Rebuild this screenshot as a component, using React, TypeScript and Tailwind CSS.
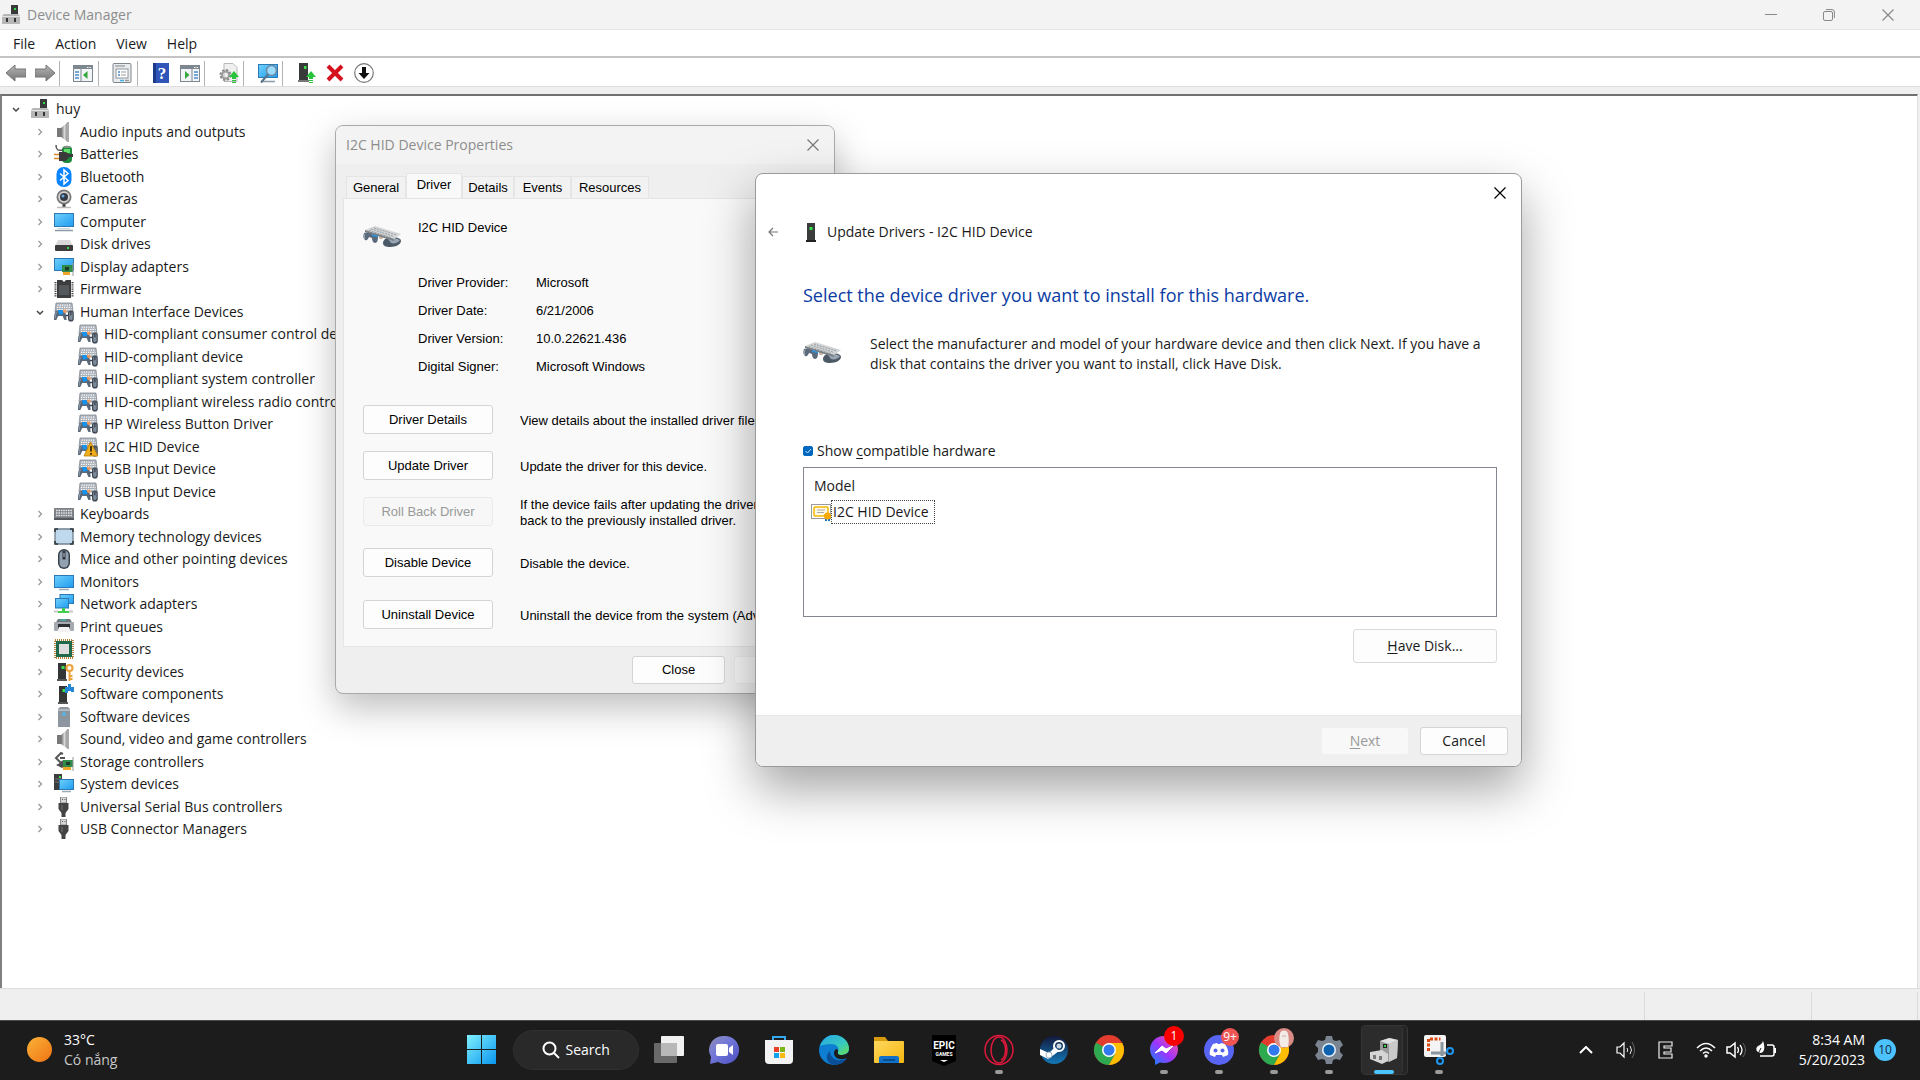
import { useState, type ReactNode } from 'react';

type IconName =
  | 'computerRoot' | 'speaker' | 'battery' | 'bluetooth' | 'camera' | 'computer' | 'disk' | 'display'
  | 'firmware' | 'hid' | 'hidWarn' | 'keyboard' | 'memory' | 'mouse' | 'monitor' | 'network' | 'printer'
  | 'processor' | 'security' | 'component' | 'software' | 'storage' | 'system' | 'usb';

interface TreeItem {
  label: string;
  icon: IconName;
  depth: 0 | 1 | 2;
  open?: boolean;
}

const tree: TreeItem[] = [
  { label: 'huy', icon: 'computerRoot', depth: 0, open: true },
  { label: 'Audio inputs and outputs', icon: 'speaker', depth: 1 },
  { label: 'Batteries', icon: 'battery', depth: 1 },
  { label: 'Bluetooth', icon: 'bluetooth', depth: 1 },
  { label: 'Cameras', icon: 'camera', depth: 1 },
  { label: 'Computer', icon: 'computer', depth: 1 },
  { label: 'Disk drives', icon: 'disk', depth: 1 },
  { label: 'Display adapters', icon: 'display', depth: 1 },
  { label: 'Firmware', icon: 'firmware', depth: 1 },
  { label: 'Human Interface Devices', icon: 'hid', depth: 1, open: true },
  { label: 'HID-compliant consumer control device', icon: 'hid', depth: 2 },
  { label: 'HID-compliant device', icon: 'hid', depth: 2 },
  { label: 'HID-compliant system controller', icon: 'hid', depth: 2 },
  { label: 'HID-compliant wireless radio controls', icon: 'hid', depth: 2 },
  { label: 'HP Wireless Button Driver', icon: 'hid', depth: 2 },
  { label: 'I2C HID Device', icon: 'hidWarn', depth: 2 },
  { label: 'USB Input Device', icon: 'hid', depth: 2 },
  { label: 'USB Input Device', icon: 'hid', depth: 2 },
  { label: 'Keyboards', icon: 'keyboard', depth: 1 },
  { label: 'Memory technology devices', icon: 'memory', depth: 1 },
  { label: 'Mice and other pointing devices', icon: 'mouse', depth: 1 },
  { label: 'Monitors', icon: 'monitor', depth: 1 },
  { label: 'Network adapters', icon: 'network', depth: 1 },
  { label: 'Print queues', icon: 'printer', depth: 1 },
  { label: 'Processors', icon: 'processor', depth: 1 },
  { label: 'Security devices', icon: 'security', depth: 1 },
  { label: 'Software components', icon: 'component', depth: 1 },
  { label: 'Software devices', icon: 'software', depth: 1 },
  { label: 'Sound, video and game controllers', icon: 'speaker', depth: 1 },
  { label: 'Storage controllers', icon: 'storage', depth: 1 },
  { label: 'System devices', icon: 'system', depth: 1 },
  { label: 'Universal Serial Bus controllers', icon: 'usb', depth: 1 },
  { label: 'USB Connector Managers', icon: 'usb', depth: 1 },
];

const indent = { 0: 'pl-[6px]', 1: 'pl-[30px]', 2: 'pl-[54px]' };

/* shared gradients, referenced by id from every drawing below */
const Defs = () => (
  <svg className="absolute size-0" aria-hidden="true">
    <defs>
      <linearGradient id="screen" x1="0" y1="0" x2="1" y2="1"><stop offset="0" stopColor="#6fd0fb" /><stop offset="1" stopColor="#1f9cf0" /></linearGradient>
      <linearGradient id="metal" x1="0" y1="0" x2="1" y2="0"><stop offset="0" stopColor="#6e6e6e" /><stop offset=".5" stopColor="#d8d8d8" /><stop offset="1" stopColor="#7d7d7d" /></linearGradient>
      <linearGradient id="arrow" x1="0" y1="0" x2="0" y2="1"><stop offset="0" stopColor="#b5b5b5" /><stop offset="1" stopColor="#757575" /></linearGradient>
      <linearGradient id="win" x1="0" y1="0" x2="1" y2="1"><stop offset="0" stopColor="#7ff0ff" /><stop offset="1" stopColor="#0b96ee" /></linearGradient>
      <linearGradient id="folder" x1="0" y1="0" x2="1" y2="1"><stop offset="0" stopColor="#ffd75e" /><stop offset="1" stopColor="#f5b60f" /></linearGradient>
      <linearGradient id="chat" x1="0" y1="0" x2="1" y2="1"><stop offset="0" stopColor="#8e8db5" /><stop offset=".4" stopColor="#7479d8" /><stop offset="1" stopColor="#4a4fc4" /></linearGradient>
      <linearGradient id="msgr" x1="0" y1="1" x2="1" y2="0"><stop offset="0" stopColor="#0a8cff" /><stop offset=".5" stopColor="#a033ff" /><stop offset="1" stopColor="#ff5c87" /></linearGradient>
      <linearGradient id="edgeTop" x1="0" y1="0" x2="1" y2="1"><stop offset="0" stopColor="#2aa7e6" /><stop offset=".6" stopColor="#36c9c0" /><stop offset="1" stopColor="#6be04c" /></linearGradient>
      <linearGradient id="steam" x1="0" y1="0" x2="0" y2="1"><stop offset="0" stopColor="#14193d" /><stop offset="1" stopColor="#1379b8" /></linearGradient>
      <linearGradient id="sun" x1="0" y1="0" x2="1" y2="1"><stop offset="0" stopColor="#fbb33a" /><stop offset="1" stopColor="#ee7313" /></linearGradient>
    </defs>
  </svg>
);

const Hid = () => (
  <>
    <path d="M2 1h16l1 9H1z" fill="#aab0b8" stroke="#868d96" strokeWidth=".8" />
    <path d="M3.500 3.200h13.500M3 5.400h14.500M3 7.600h14.500" stroke="#fff" strokeWidth="1.200" strokeDasharray="1.300 1" />
    <path d="M0 18c-.3-4 .8-9 2.800-9.600H9c2.600.6 3.600 5.600 3.600 9.600h-2.200L8.600 14H4.200L2.300 18z" fill="#5a6879" />
    <path d="M1.200 16.500c0-3 .8-6 2-7" stroke="#93a1b1" strokeWidth=".9" fill="none" />
    <path d="M4 8h4.500l1 4-4.500.8z" fill="#1593f0" />
    <circle cx="10.800" cy="9.300" r="1.800" fill="#ee9a5d" />
    <rect x="14" y="8.500" width="5.800" height="11" rx="2.800" fill="#3f4854" />
    <rect x="15.200" y="9.600" width="3.400" height="8.500" rx="1.700" fill="#7e8b9a" />
    <path d="M16.900 9.600v3.600M11.600 13.500h3" stroke="#39424d" strokeWidth="1.300" />
  </>
);

const tower = (
  <>
    <path d="M4 1h8v16H4z" fill="#343636" />
    <path d="M3 17h10v2H3z" fill="#555" />
    <rect x="7.500" y="4" width="3" height="3" fill="#3be04a" />
  </>
);

const art: Record<IconName, ReactNode> = {
  computerRoot: (
    <>
      <path d="M10 0h7v12h-7z" fill="#383a39" /><rect x="13" y="3" width="2" height="2" fill="#2fe04a" />
      <path d="M1 11l2-2h14l2 2v8H1z" fill="#b6b6b6" /><path d="M1 11h18v1H1z" fill="#e3e3e3" />
      <path d="M5 13h2v4H5zM13 13h2v4h-2z" fill="#353535" />
    </>
  ),
  speaker: (
    <>
      <path d="M3 6h4v9H3z" fill="#777" /><path d="M7 6l7-6v20l-7-5z" fill="url(#metal)" /><path d="M13 0h2v20h-2z" fill="#aaa" />
    </>
  ),
  battery: (
    <>
      <rect x="8" y="2" width="10" height="17" rx="4" fill="#1c8a3c" /><rect x="10" y="5" width="6" height="4" fill="#63e06c" /><path d="M9 4q4-5 8 0z" fill="#8b8f8b" />
      <path d="M2 1c0 5 2 6 7 5" stroke="#555" strokeWidth="1.500" fill="none" />
      <path d="M5 8h6c2 0 3 2 5 2h3v3h-3c-2 0-3 4-5 4H5z" fill="#3b3b3b" /><path d="M0 10.500h5M0 14.500h5" stroke="#d98a22" strokeWidth="1.600" />
    </>
  ),
  bluetooth: (
    <>
      <rect x="2.500" y="0" width="15" height="20" rx="7" fill="#0a84ff" /><path d="M6 6.500l8 7L10 17V3l4 3.500-8 7" fill="none" stroke="#fff" strokeWidth="1.500" />
    </>
  ),
  camera: (
    <>
      <circle cx="10" cy="8" r="7.500" fill="#777" /><circle cx="10" cy="8" r="5.800" fill="#d4d4d4" /><circle cx="10" cy="8" r="4" fill="#333b44" /><circle cx="9" cy="7" r="1.500" fill="#6fa9dd" />
      <path d="M8.500 15h3v3h-3z" fill="#444" /><path d="M3 18.500h14" stroke="#bbb" strokeWidth="1.500" />
    </>
  ),
  computer: (
    <>
      <rect x=".5" y="1.500" width="19" height="13" fill="url(#screen)" stroke="#2c79b5" /><path d="M4 16.500h12" stroke="#cbd5dc" /><path d="M1 18.500h18" stroke="#8c9aa5" strokeWidth="1.500" />
    </>
  ),
  disk: (
    <>
      <path d="M4 6h12l3 6H1z" fill="#d9d9d9" /><rect x="1" y="11" width="18" height="6" rx="1" fill="#3c3c3c" /><rect x="13" y="13" width="2" height="2" fill="#36d64a" />
    </>
  ),
  display: (
    <>
      <rect x=".5" y="1.500" width="19" height="12" fill="url(#screen)" stroke="#2c79b5" /><rect x="8" y="8" width="11" height="7" fill="#2f8c4b" /><rect x="11" y="10" width="4" height="3.500" fill="#1c3b28" /><path d="M9 15h7v3H9z" fill="#f0a526" /><path d="M19 6v13" stroke="#999" />
    </>
  ),
  firmware: (
    <>
      <path d="M3 1h5l2 2 2-2h5v18H3z" fill="#3b3d3f" /><path d="M1.500 3v15M18.500 3v15" stroke="#444" strokeWidth="2" strokeDasharray="1.200 1" /><path d="M5 6h10v10H5z" fill="#56595c" />
    </>
  ),
  hid: <Hid />,
  hidWarn: (
    <>
      <Hid /><path d="M12.500 5L20 19H6z" fill="#f0ae1c" stroke="#b97f08" strokeWidth=".8" /><path d="M13 9v5.500M13 16v1.800" stroke="#241b05" strokeWidth="1.600" />
    </>
  ),
  keyboard: (
    <>
      <rect x="0" y="4" width="20" height="12" rx="1" fill="#7d8085" /><path d="M2 6.500h16M2 9h16M2 11.500h16" stroke="#e5e7ea" strokeWidth="1.500" strokeDasharray="1.600 .8" /><path d="M0 14h20v2H0z" fill="#54575b" />
    </>
  ),
  memory: (
    <>
      <rect x="1" y="2" width="18" height="15" rx="1.500" fill="#bfd8ec" stroke="#6f8190" strokeWidth="1.300" /><path d="M1 5V2h3M16 2h3v3M19 14v3h-3M4 17H1v-3" fill="none" stroke="#30373d" strokeWidth="1.600" />
    </>
  ),
  mouse: (
    <>
      <rect x="4" y="0" width="12" height="20" rx="6" fill="#39414a" /><rect x="5.500" y="1.500" width="9" height="17" rx="4.500" fill="#91a1b0" /><path d="M10 1.500v9" stroke="#2e353c" strokeWidth="3" /><path d="M10 4v4" stroke="#b8c6d2" />
    </>
  ),
  monitor: (
    <>
      <rect x=".5" y="3.500" width="19" height="12" fill="url(#screen)" stroke="#2c79b5" /><path d="M5 17.500h10" stroke="#9babb7" strokeWidth="1.500" />
    </>
  ),
  network: (
    <>
      <rect x="6" y=".5" width="13.500" height="9" fill="url(#screen)" stroke="#2c79b5" /><rect x="1.500" y="4.500" width="13" height="9.500" fill="url(#screen)" stroke="#2c79b5" /><path d="M8 14h3v3h4v2H4v-2h4z" fill="#3fcf4d" /><path d="M0 17.500h4M15 17.500h4" stroke="#c9c9c9" strokeWidth="2" />
    </>
  ),
  printer: (
    <>
      <path d="M4 2h12l3 5H1z" fill="#6f767c" /><rect x="0" y="5" width="20" height="9" rx="1" fill="#a4aaaf" /><path d="M4 7h12v7H4z" fill="#2c3033" /><path d="M5 10h10l2 5H3z" fill="#f3f3f3" /><path d="M6 3h6" stroke="#33c8bb" />
    </>
  ),
  processor: (
    <>
      <rect x="1" y="1" width="18" height="18" fill="none" stroke="#b5813c" strokeWidth="2" strokeDasharray="1 1" /><rect x="2" y="2" width="16" height="16" fill="#21694b" /><rect x="5" y="5" width="10" height="10" fill="#dedede" />
    </>
  ),
  security: (
    <>
      {tower}<circle cx="15.500" cy="6" r="3" fill="none" stroke="#e8a33c" strokeWidth="2.200" /><path d="M15.500 9v10M16 14h2.500M16 17h2.500" stroke="#e8a33c" strokeWidth="2" />
    </>
  ),
  component: (
    <>
      <g transform="translate(1 1)">{tower}</g><path d="M11 3h3V0h3v3h3v5h-3V7h-3v2h-3z" fill="#2386d6" />
    </>
  ),
  software: (
    <>
      <path d="M4 2l2-2h8l2 2v18H4z" fill="#8d969e" /><path d="M4 2h12v2H4z" fill="#b1bac1" /><path d="M10 5l2 2-2 2-2-2z" fill="#43c2ff" />
    </>
  ),
  storage: (
    <>
      <path d="M9 2L7 1 2 6l5 5 2-2M6 6h5" fill="none" stroke="#555" strokeWidth="2" /><path d="M2 13l6-3 5 3-5 3z" fill="#4d4f51" /><rect x="9" y="8" width="10" height="7" fill="#2f8c4b" /><rect x="12" y="10" width="4" height="3" fill="#1c3b28" /><path d="M9 15h8v3H9z" fill="#f0a526" /><path d="M19 5v14" stroke="#999" />
    </>
  ),
  system: (
    <>
      <path d="M0 0h8v16H0z" fill="#3b3d3f" /><path d="M1 5h6M1 8h5" stroke="#777" /><rect x="5" y="2" width="2" height="2" fill="#3be04a" /><rect x="5.500" y="5.500" width="14" height="10" fill="url(#screen)" stroke="#2c79b5" /><path d="M8 17.500h9" stroke="#9babb7" strokeWidth="1.500" />
    </>
  ),
  usb: (
    <>
      <rect x="6.500" y="0" width="6" height="6" fill="#d7d7d7" stroke="#888" /><path d="M8 2.500h1M10.500 2.500h1" stroke="#555" /><path d="M4.500 6h10v6l-3 4v4h-4v-4l-3-4z" fill="#444" /><path d="M8 8v5" stroke="#777" />
    </>
  ),
};

const Icon = ({ name }: { name: IconName }) => (
  <svg viewBox="0 0 20 20" className="size-5 shrink-0" aria-hidden="true">{art[name]}</svg>
);

const CloseGlyph = () => (
  <svg viewBox="0 0 12 12" className="size-3" aria-hidden="true"><path d="M.5.5l11 11M11.500.5l-11 11" fill="none" stroke="currentColor" strokeWidth="1.200" /></svg>
);

const DeviceArt = () => (
  <svg viewBox="0 0 38 22" className="h-[22px] w-[38px] shrink-0" aria-hidden="true">
    <path d="M1 8c-1 3-1 5 1 7 2 1 3-1 4-3l3 1c0 2 1 5 3 5 3 0 3-4 3-8L6 7z" fill="#5c6b7c" />
    <path d="M2 9c-1 2-1 4 0 5" stroke="#a5b2c0" fill="none" />
    <path d="M9 8l7 1-1 3-6-1z" fill="#1c96ef" /><circle cx="18" cy="12" r="2.200" fill="#cdb7a8" />
    <path d="M20 18c0-4 5-6 9-6s9 1 9 4-5 6-11 6c-4 0-7-1-7-4z" fill="#4c5967" /><path d="M25 14c4-2 8-1 12 1-2 3-6 4-9 3z" fill="#98a5b2" />
    <path d="M2 5l10-4 26 8-7 5z" fill="#d3d5d6" /><path d="M2 5l29 9v2L2 7z" fill="#7b8085" />
    <path d="M11 3l23 7M8 4l23 7.500M6 5.500l22 7" stroke="#9b9fa3" strokeDasharray="2 1" />
  </svg>
);

const Rule = () => <span className="h-[25px] w-px bg-[#b4b4b4]" />;

const ToolButton = ({ label, children }: { label: string; children: ReactNode }) => (
  <button aria-label={label} className="flex w-[29px] justify-center">
    <svg viewBox="0 0 20 20" className="size-5" aria-hidden="true">{children}</svg>
  </button>
);

const panel = (
  <>
    <rect x=".5" y="2.500" width="19" height="16" fill="#f2f4f6" stroke="#7d8790" /><path d="M0 3h20v3H0z" fill="#7d8790" /><path d="M14 4.500h4" stroke="#fff" strokeDasharray="1 .6" />
  </>
);

const Toolbar = () => (
  <div className="flex h-7 items-center bg-white pt-[2px] pl-px">
    <ToolButton label="Back"><path d="M0 10L9 2v4h11v8H9v4z" fill="url(#arrow)" stroke="#777" /></ToolButton>
    <ToolButton label="Forward"><path d="M20 10L11 2v4H0v8h11v4z" fill="url(#arrow)" stroke="#777" /></ToolButton>
    <Rule />
    <div className="flex w-[38px] justify-end pr-[1px]">
      <ToolButton label="Show/hide console tree">{panel}<path d="M2 9h4M2 12h4M2 15h4" stroke="#4b8fd0" strokeWidth="1.500" /><path d="M8 6v12" stroke="#7d8790" /><path d="M14.500 8v8L10 12z" fill="#35a73c" /></ToolButton>
    </div>
    <Rule />
    <div className="flex w-[38px] justify-end pr-[1px]">
      <ToolButton label="Properties"><rect x="1" y=".5" width="18" height="19" rx="1" fill="#e9ebed" stroke="#7f868c" /><path d="M3 3h10" stroke="#a0a7ad" strokeWidth="1.500" /><rect x="4" y="6" width="12" height="9" fill="#fff" stroke="#8c949b" /><path d="M6 9h2M6 12h2" stroke="#3f86ca" strokeWidth="1.500" /><path d="M9 9h5M9 12h5" stroke="#999" /><path d="M8 17.500h4" stroke="#44b3e8" strokeWidth="1.500" /><path d="M13 17.500h4" stroke="#999" strokeWidth="1.500" /></ToolButton>
    </div>
    <Rule />
    <div className="flex w-[66px] justify-end">
      <ToolButton label="Help"><rect x="2" y="0" width="16" height="20" fill="#2f55b8" /><path d="M2 0h3v20H2z" fill="#1c3a8c" /><text x="11" y="16" fontSize="17" fontWeight="700" textAnchor="middle" fill="#fff" fontFamily="Liberation Serif, serif">?</text></ToolButton>
      <ToolButton label="Action pane">{panel}<path d="M14 9h4M14 12h4M14 15h4" stroke="#4b8fd0" strokeWidth="1.500" /><path d="M12 6v12" stroke="#7d8790" /><path d="M5 8v8l4.500-4z" fill="#35a73c" /></ToolButton>
    </div>
    <Rule />
    <div className="flex w-[38px] justify-end">
      <ToolButton label="Update device driver"><path d="M5 .5h9l4 4v14H5z" fill="#f0f0f0" stroke="#b9b9b9" /><circle cx="6.500" cy="12" r="4.500" fill="none" stroke="#8a8a8a" strokeWidth="3" strokeDasharray="2.200 1.300" /><circle cx="6.500" cy="12" r="3.500" fill="none" stroke="#9c9c9c" strokeWidth="2" /><path d="M15 8l5 6h-3v2h-4v-2h-3zM13 17h4v1h-4zM13 19h4v1h-4z" fill="#28c43c" /></ToolButton>
    </div>
    <Rule />
    <div className="flex w-[38px] justify-end">
      <ToolButton label="Scan for hardware changes"><rect x=".5" y="1.500" width="19" height="13" fill="url(#screen)" stroke="#2c79b5" /><path d="M3 18.500h14" stroke="#8c9aa5" strokeWidth="1.500" /><circle cx="13.500" cy="7.500" r="5" fill="#9bdcff" stroke="#6c8ba2" strokeWidth="1.500" /><path d="M10 11.500l-7 8" stroke="#56738a" strokeWidth="2" /></ToolButton>
    </div>
    <Rule />
    <div className="flex pl-[8px]">
      <ToolButton label="Enable device"><path d="M3 0h9v17H3z" fill="#383a3a" /><path d="M2 17h11v2H2z" fill="#777" /><rect x="8" y="3" width="2.500" height="3" fill="#3be04a" /><path d="M15 8l5 6h-3v2h-4v-2h-3zM13 17h4v1h-4zM13 19h4v1h-4z" fill="#28c43c" /></ToolButton>
      <ToolButton label="Uninstall device"><path d="M3 3l14 14M17 3L3 17" stroke="#d6111e" strokeWidth="4" /></ToolButton>
      <ToolButton label="Disable device"><circle cx="10" cy="10" r="9.300" fill="#fff" stroke="#777" strokeWidth="1.200" /><path d="M8 4h4v6h3.500L10 16l-5.500-6H8z" fill="#111" /></ToolButton>
    </div>
  </div>
);

const Chevron = ({ open }: { open?: boolean }) => (
  <svg viewBox="0 0 16 16" className="size-4" fill="none" aria-hidden="true">
    {open ? <path d="M5 7l3 3 3-3" stroke="#444" strokeWidth="1.500" /> : <path d="M6.500 5l3 3-3 3" stroke="#999" strokeWidth="1.300" />}
  </svg>
);

const DeviceTree = () => (
  <ul>
    {tree.map((item, i) => (
      <li key={i} className={`flex items-center gap-[6px] whitespace-nowrap odd:h-[22px] even:h-[23px] ${indent[item.depth]}`}>
        {item.depth < 2 ? (
          <button aria-label={`Toggle ${item.label}`}><Chevron open={item.open} /></button>
        ) : (
          <span className="w-4" />
        )}
        <Icon name={item.icon} />
        <span>{item.label}</span>
      </li>
    ))}
  </ul>
);

const actions = [
  { name: 'Driver Details', text: ['View details about the installed driver files.'], box: 'h-[46px]' },
  { name: 'Update Driver', text: ['Update the driver for this device.'], box: 'h-[46px]' },
  { name: 'Roll Back Driver', text: ['If the device fails after updating the driver, roll', 'back to the previously installed driver.'], box: 'h-[51px]', off: true },
  { name: 'Disable Device', text: ['Disable the device.'], box: 'h-[52px]' },
  { name: 'Uninstall Device', text: ['Uninstall the device from the system (Advanced).'], box: 'h-[46px]' },
];

const facts = [
  ['Driver Provider:', 'Microsoft'],
  ['Driver Date:', '6/21/2006'],
  ['Driver Version:', '10.0.22621.436'],
  ['Digital Signer:', 'Microsoft Windows'],
];

const tabs = [
  { name: 'General', width: 'w-[60px]' },
  { name: 'Driver', width: 'w-[56px]' },
  { name: 'Details', width: 'w-[52px]' },
  { name: 'Events', width: 'w-[57px]' },
  { name: 'Resources', width: 'w-[78px]' },
];

const PropertiesDialog = () => (
  <section aria-label="I2C HID Device Properties" className="absolute top-[125px] left-[335px] w-[500px] overflow-hidden rounded-lg border border-[#a9a9a9] bg-[#efefef] font-['Liberation_Sans',Arial,sans-serif] text-[13px] leading-4 text-black shadow-[0_14px_36px_rgba(0,0,0,0.26)]">
    <header className="flex h-[38px] items-center justify-between bg-[#f3f3f3] pl-[10px] font-['Open_Sans',sans-serif] text-sm text-[#8d8d8d]">
      <h2>I2C HID Device Properties</h2>
      <button aria-label="Close" className="flex w-[43px] justify-center text-[#777]"><CloseGlyph /></button>
    </header>

    <div role="tablist" className="flex items-end pt-[9px] pl-[10px]">
      {tabs.map((tab) => (
        <button
          key={tab.name}
          role="tab"
          aria-selected={tab.name === 'Driver'}
          className={`${tab.width} ${tab.name === 'Driver' ? 'h-[25px] bg-[#f9f9f9] pb-[3px]' : 'h-[22px] bg-[#f2f2f2]'} border border-b-0 border-[#e5e5e5] text-center`}
        >
          {tab.name}
        </button>
      ))}
    </div>

    <div className="mx-[7px] h-[449px] border border-[#e5e5e5] bg-[#f9f9f9] pl-[19px]">
      <div className="flex gap-[17px] pt-[21px]">
        <div className="pt-[5px]"><DeviceArt /></div>
        <p>I2C HID Device</p>
      </div>
      <dl className="grid grid-cols-[118px_1fr] gap-y-[12px] pt-[28px] pb-[30px] pl-[55px]">
        {facts.map(([term, value]) => (
          <div key={term} className="contents"><dt>{term}</dt><dd>{value}</dd></div>
        ))}
      </dl>
      {actions.map((action) => (
        <div key={action.name} className={`flex items-start gap-[27px] ${action.box}`}>
          <button disabled={action.off} className="h-[29px] w-[130px] shrink-0 rounded-[3px] border border-[#d4d4d4] bg-[#fdfdfd] disabled:border-[#eaeaea] disabled:bg-[#f7f7f7] disabled:text-[#999]">{action.name}</button>
          <p className={`whitespace-nowrap ${action.off ? '' : 'pt-[8px]'}`}>{action.text[0]}{action.text[1] && <><br />{action.text[1]}</>}</p>
        </div>
      ))}
    </div>

    <footer className="flex h-[46px] items-center justify-end gap-[9px] pr-[7px]">
      <button className="h-7 w-[93px] rounded-[3px] border border-[#d4d4d4] bg-[#fdfdfd]">Close</button>
      <button className="h-7 w-[93px] rounded-[3px] border border-[#eaeaea] bg-[#f7f7f7]">Cancel</button>
    </footer>
  </section>
);

const UpdateDialog = () => {
  const [compatible, setCompatible] = useState(true);
  return (
    <section aria-label="Update Drivers" className="absolute top-[173px] left-[755px] w-[767px] overflow-hidden rounded-lg border border-[#9b9b9b] bg-white text-[#1a1a1a] shadow-[0_22px_50px_rgba(0,0,0,0.36)]">
      <header className="flex h-[38px] justify-end">
        <button aria-label="Close" className="flex w-[43px] items-center justify-center text-black"><CloseGlyph /></button>
      </header>
      <div className="flex h-[40px] items-center pl-[12px]">
        <button aria-label="Back">
          <svg viewBox="0 0 10 10" className="size-[10px]" fill="none" aria-hidden="true"><path d="M10 5H1M5 1L1 5l4 4" stroke="#777" strokeWidth="1.200" /></svg>
        </button>
        <svg viewBox="0 0 10 19" className="ml-[28px] h-[19px] w-[10px]" aria-hidden="true"><path d="M1 0h8v17H1z" fill="#3a3c3c" /><path d="M0 17h10v2H0z" fill="#222" /><rect x="3.500" y="4" width="3" height="3" fill="#35e14a" /></svg>
        <h2 className="ml-[11px]">Update Drivers - I2C HID Device</h2>
      </div>

      <div className="pr-[24px] pl-[47px]">
        <h3 className="pt-[29px] text-lg leading-7 text-[#0b3ca3]">Select the device driver you want to install for this hardware.</h3>
        <div className="flex gap-[29px] pt-[25px]">
          <div className="pt-[7px]"><DeviceArt /></div>
          <p className="leading-5">Select the manufacturer and model of your hardware device and then click Next. If you have a<br />disk that contains the driver you want to install, click Have Disk.</p>
        </div>

        <label className="flex items-center gap-[4px] pt-[67px] leading-5">
          <span className="relative flex">
            <input type="checkbox" checked={compatible} onChange={(e) => setCompatible(e.target.checked)} className="size-[10px] appearance-none rounded-[2px] border border-[#0067c0] checked:bg-[#0067c0]" />
            <svg viewBox="0 0 10 10" className="pointer-events-none absolute inset-0 size-[10px]" fill="none" aria-hidden="true"><path d="M2.500 5l2 2 3.500-4" stroke="#cfe6ff" /></svg>
          </span>
          <span>Show <u className="underline-offset-2">c</u>ompatible hardware</span>
        </label>

        <div className="mt-[6px] h-[150px] border border-[#828790] pt-[8px] pl-[7px]">
          <table className="text-left">
            <thead><tr><th className="pl-[3px] leading-5 font-normal">Model</th></tr></thead>
            <tbody>
              <tr>
                <td className="flex items-center pt-[4px]">
                  <svg viewBox="0 0 20 18" className="h-[18px] w-5" aria-hidden="true"><rect x=".5" y="1.500" width="19" height="14" fill="#fff" stroke="#9a9a9a" /><rect x="3" y="4" width="14" height="9" rx="1" fill="#fff8e2" stroke="#f5b800" strokeWidth="1.500" /><path d="M6 7h8M6 9.500h7" stroke="#aaa" /><path d="M14 14h2v4h-2zM17 14h2v4h-2z" fill="#1673c4" /><circle cx="16.500" cy="13" r="3.500" fill="#f6a800" /></svg>
                  <span className="h-6 border border-dotted border-[#444] pr-[5px] pl-px leading-[22px]">I2C HID Device</span>
                </td>
              </tr>
            </tbody>
          </table>
        </div>

        <div className="flex justify-end pt-[12px] pb-[52px]">
          <button className="h-[34px] w-36 rounded-[3px] border border-[#d9d9d9] bg-[#fdfdfd]"><u className="underline-offset-2">H</u>ave Disk...</button>
        </div>
      </div>

      <footer className="flex h-[51px] items-center justify-end gap-[11px] border-t border-[#e6e6e6] bg-[#efefef] pr-[13px]">
        <button disabled className="h-7 w-[88px] rounded-[3px] border border-[#f0f0f0] bg-[#f8f8f8] text-[#999]"><u className="underline-offset-2">N</u>ext</button>
        <button className="h-7 w-[88px] rounded-[3px] border border-[#d4d4d4] bg-[#fdfdfd]">Cancel</button>
      </footer>
    </section>
  );
};

const chrome = (
  <>
    <circle cx="15" cy="15" r="15" fill="#e33b2e" />
    <path d="M15 15L2 7.500A15 15 0 0 0 15 30l6.500-11.300z" fill="#2da94f" />
    <path d="M15 8h13.300A15 15 0 0 1 15 30l6.300-11.200z" fill="#fdbd00" />
    <circle cx="15" cy="15" r="7" fill="#fff" /><circle cx="15" cy="15" r="5.500" fill="#3279ee" />
  </>
);

const apps: { name: string; art: ReactNode; running?: boolean; active?: boolean; badge?: ReactNode }[] = [
  { name: 'Task View', art: <><rect x="7" y="1" width="23" height="20" rx="1" fill="#f1f1f1" /><rect x="0" y="8" width="23" height="20" rx="1" fill="#777" fillOpacity=".85" /><path d="M7 8h16v13H7z" fill="#b8b8b8" /></> },
  { name: 'Chat', art: <><path d="M15 1a14 14 0 1 1-6 26l-8 2 1-7A14 14 0 0 1 15 1z" fill="url(#chat)" /><rect x="7" y="9" width="12" height="12" rx="2" fill="#fff" /><path d="M20 13l4-3v10l-4-3z" fill="#fff" /></> },
  { name: 'Microsoft Store', art: <><path d="M9 6V2h12v4" fill="none" stroke="#34a8f0" strokeWidth="2" /><path d="M1 5h28v20q0 4-4 4H5q-4 0-4-4z" fill="#f3f3f3" /><path d="M10 12h5v5h-5z" fill="#e8402a" /><path d="M16 12h5v5h-5z" fill="#7cb518" /><path d="M10 18h5v5h-5z" fill="#10a3ec" /><path d="M16 18h5v5h-5z" fill="#fab90f" /></> },
  { name: 'Microsoft Edge', art: <><circle cx="15" cy="15" r="15" fill="#0d7ed1" /><path d="M1 11C4 3 10 0 15 0c9 0 15 7 15 13 0 5-4 7-8 7-3 0-4-1-3-3 2-5-2-8-7-8-5 0-9 1-11 2z" fill="url(#edgeTop)" /><path d="M11 16c0 6 5 10 11 9 3 0 5-1 6-2-3 5-8 7-13 7-7-1-10-9-4-14z" fill="#0c4f99" /><path d="M19 17c-1 2 1 3 3 3 3 0 7-1 8-4v4l-2 3c-7 3-13 0-13-5 0-2 1-4 3-4 1 1 1 2 1 3z" fill="#1c1c1c" /></> },
  { name: 'File Explorer', art: <><path d="M0 2h11l3 4h15v8H0z" fill="#d79a0c" /><rect x="0" y="6" width="30" height="22" rx="1" fill="url(#folder)" /><path d="M5 28v-5q0-2 2-2h16q2 0 2 2v5z" fill="#1270c8" /><path d="M9 25h12" stroke="#07508f" strokeWidth="2" /></> },
  { name: 'Epic Games', art: <><path d="M3 0h24v26l-12 5L3 26z" fill="#000" /><text x="15" y="14" fontSize="10" fontWeight="700" textAnchor="middle" fill="#fff" fontFamily="Roboto, sans-serif">EPIC</text><text x="15" y="21" fontSize="5" fontWeight="700" textAnchor="middle" fill="#fff" fontFamily="Roboto, sans-serif">GAMES</text><path d="M11 25h8l-4 2z" fill="#fff" /></> },
  { name: 'Opera', running: true, art: <g fill="none" stroke="#e0183c" strokeWidth="1.500"><ellipse cx="15" cy="15" rx="14" ry="14.500" /><ellipse cx="15" cy="15" rx="8" ry="13" /><path d="M17 5c6 3 6 17 0 20" /></g> },
  { name: 'Steam', art: <><circle cx="15" cy="15" r="14" fill="url(#steam)" /><circle cx="20" cy="11" r="5" fill="none" stroke="#fff" strokeWidth="2" /><circle cx="20" cy="11" r="2.500" fill="#cbd5de" /><path d="M1 14l9 4 6-6 4 4-8 6-3 2-8-4z" fill="#fff" /><circle cx="10" cy="20" r="3" fill="#fff" stroke="#9fb3c2" /></> },
  { name: 'Google Chrome', art: chrome },
  { name: 'Messenger', running: true, badge: <span className="absolute -top-[9px] left-[15px] flex size-5 items-center justify-center rounded-full bg-[#f80000] text-xs text-white">1</span>, art: <><path d="M15 1c8 0 14 6 14 13.500S23 28 15 28l-4-.5L6 30v-5c-3-3-5-6-5-10.500C1 7 7 1 15 1z" fill="url(#msgr)" /><path d="M6 18l7-7 4 3 7-3-7 7-4-3z" fill="#fff" stroke="#fff" /></> },
  { name: 'Discord', running: true, badge: <span className="absolute -top-[7px] left-[17px] flex size-[18px] items-center justify-center rounded-full bg-[#ed5555] text-xs text-white">9+</span>, art: <><circle cx="15" cy="15" r="15" fill="#5865f2" /><path d="M9 9l4-1 1 1h2l1-1 4 1c2 3 4 7 3 11l-5 2-1-2h-6l-1 2-5-2c-1-4 1-8 3-11z" fill="#fff" /><circle cx="11.500" cy="15.500" r="2" fill="#5865f2" /><circle cx="18.500" cy="15.500" r="2" fill="#5865f2" /></> },
  { name: 'Google Chrome profile', running: true, badge: <svg viewBox="0 0 20 20" className="absolute -top-[7px] left-[15px] size-5" aria-hidden="true"><circle cx="10" cy="10" r="10" fill="#d98c86" /><path d="M6 6c0-4 7-5 8 0 1 4 1 9 0 13H7C5 15 5 9 6 6z" fill="#f3ece6" /><path d="M8 8h4" stroke="#c8aa9c" /></svg>, art: chrome },
  { name: 'Settings', running: true, art: <><path d="M12 1h6l1 4 3 1 4-1 3 5-3 3v4l3 3-3 5-4-1-3 1-1 4h-6l-1-4-3-1-4 1-3-5 3-3v-4l-3-3 3-5 4 1 3-1z" fill="#7b8591" /><circle cx="15" cy="15" r="7" fill="#e8f4fc" /><circle cx="15" cy="15" r="5.500" fill="#0e62b0" /></> },
  { name: 'Device Manager', active: true, art: <><path d="M11 6l10-3 8 2-1 18-9 4-8-7z" fill="#9a9a9a" /><path d="M11 6l9-3 9 2-9 4z" fill="#e1e1e1" /><path d="M20 9l9-4-1 18-8 4z" fill="#c9c9c9" /><rect x="14" y="9" width="4" height="4" fill="#222" /><rect x="15" y="10" width="2" height="2" fill="#36d64a" /><path d="M1 17l12-2 6 4v7l-6 3-12-5z" fill="#d5d5d5" /><path d="M4 20h3v4H4zM10 21h3v4h-3z" fill="#777" /></> },
  { name: 'Snipping Tool', running: true, art: <><rect x="0" y="0" width="22" height="22" rx="2" fill="#f4f4f4" /><path d="M4.500 16v-12h12" fill="none" stroke="#d9480f" strokeWidth="3" strokeDasharray="3 1.500" /><path d="M18 7v14M7 18h15" stroke="#8c969e" strokeWidth="3" /><circle cx="26" cy="16" r="3" fill="none" stroke="#1e96f0" strokeWidth="2" /><circle cx="16" cy="26" r="3" fill="none" stroke="#1e96f0" strokeWidth="2" /></> },
];

const Taskbar = () => (
  <footer className="grid h-[60px] grid-cols-[1fr_auto_1fr] items-center border-t border-[#4a4a4a] bg-[#1c1c1c] pb-[2px] text-white">
    <button className="flex items-center gap-[12px] pl-[27px] text-left leading-5">
      <svg viewBox="0 0 26 26" className="size-[25px]" aria-hidden="true"><circle cx="13" cy="13" r="13" fill="url(#sun)" /></svg>
      <span>33°C<br /><span className="text-[#c8c8c8]">Có nắng</span></span>
    </button>

    <div className="flex h-full items-center">
      <button aria-label="Start" className="flex w-[55px] justify-center">
        <svg viewBox="0 0 29 29" className="size-[29px]" aria-hidden="true"><path d="M0 0h14v14H0zM15 0h14v14H15zM0 15h14v14H0zM15 15h14v14H15z" fill="url(#win)" /></svg>
      </button>
      <button className="mr-[3px] ml-[4px] flex h-10 w-[126px] items-center gap-[6px] rounded-full border border-[#303030] bg-[#292929] pl-[28px]">
        <svg viewBox="0 0 18 18" className="size-[18px]" fill="none" aria-hidden="true"><circle cx="7.500" cy="7.500" r="6" stroke="#fff" strokeWidth="2" /><path d="M12 12l5 5" stroke="#fff" strokeWidth="2" /></svg>
        Search
      </button>
      {apps.map((app) => (
        <button key={app.name} aria-label={app.name} className="relative flex h-full w-[55px] items-center justify-center">
          {app.active && <span className="absolute top-[4px] left-[4px] h-[50px] w-[47px] rounded-[4px] border border-[#363636] bg-[#242424]"><span className="block h-full w-[41px] rounded-[4px] border-r border-[#363636] bg-[#2c2c2c]" /></span>}
          <span className="relative">
            <svg viewBox="0 0 30 30" className="size-[30px] overflow-visible" aria-hidden="true">{app.art}</svg>
            {app.badge}
          </span>
          {app.running && <span className="absolute bottom-[4px] h-1 w-2 rounded-full bg-[#9a9a9a]" />}
          {app.active && <span className="absolute bottom-[4px] h-1 w-5 rounded-full bg-[#4cc2ff]" />}
        </button>
      ))}
    </div>

    <div className="flex items-center justify-end pr-[24px]">
      <button aria-label="Show hidden icons" className="mr-[23px]">
        <svg viewBox="0 0 14 8" className="h-2 w-[14px]" fill="none" aria-hidden="true"><path d="M1 7l6-6 6 6" stroke="#fff" strokeWidth="2" /></svg>
      </button>
      <button aria-label="Sound" className="mr-[22px]">
        <svg viewBox="0 0 20 18" className="h-[18px] w-5" fill="none" aria-hidden="true"><path d="M1 6h3l4-4v14l-4-4H1z" stroke="#fff" strokeWidth="1.200" /><path d="M11 7q1.500 2 0 4M14 5q3 4 0 8" stroke="#eee" /><path d="M16 1q5 8 0 16" stroke="#666" /></svg>
      </button>
      <button aria-label="Input method" className="mr-[23px]">
        <svg viewBox="0 0 15 18" className="h-[18px] w-[15px]" fill="none" aria-hidden="true"><path d="M1 1h13v4H6v2h7v4H6v2h8v4H1z" stroke="#eee" strokeWidth="1.200" /></svg>
      </button>
      <button className="mr-[23px] flex items-center gap-[10px]" aria-label="Network, volume and battery">
        <svg viewBox="0 0 20 16" className="h-4 w-5" fill="none" stroke="#fff" strokeWidth="1.500" aria-hidden="true"><path d="M1 6q9-9 18 0M4 9q6-6 12 0M7 11.500q3-3 6 0" /><circle cx="10" cy="14" r="1" fill="#fff" /></svg>
        <svg viewBox="0 0 20 18" className="h-[18px] w-5" fill="none" aria-hidden="true"><path d="M1 6h3l5-4v14l-5-4H1z" stroke="#fff" strokeWidth="1.500" /><path d="M11.500 6q2 3 0 6M14 4q4 5 0 10" stroke="#fff" strokeWidth="1.300" /><path d="M17 2q5 7 0 14" stroke="#666" /></svg>
        <svg viewBox="0 0 20 18" className="h-[18px] w-5" fill="none" aria-hidden="true"><path d="M11 4h5q2 0 2 2v7q0 2-2 2H4" stroke="#fff" strokeWidth="1.500" /><path d="M18 7h2v5h-2z" fill="#fff" /><path d="M7 0c2 5 2 11-2 12-5 0-6-5-3-7 2-1 4-2 5-5z" fill="#fff" /><path d="M1 15l4-8" stroke="#1c1c1c" /></svg>
      </button>
      <button className="mr-[9px] text-right leading-5">8:34 AM<br />5/20/2023</button>
      <button aria-label="Notifications" className="flex size-[22px] items-center justify-center rounded-full bg-[#4cc2ff] text-xs text-[#12293a]">10</button>
    </div>
  </footer>
);

const App = () => (
  <div className="relative flex min-h-screen flex-col overflow-hidden bg-[#efefef] font-['Open_Sans','Noto_Sans',sans-serif] text-sm leading-5 text-[#1a1a1a]">
    <Defs />
    <header className="flex h-[30px] items-center border-b border-[#e5e5e5] bg-[#f3f3f3] pl-px text-[#8d8d8d]">
      <Icon name="computerRoot" />
      <h1 className="grow pl-[6px]">Device Manager</h1>
      <div className="flex items-center text-[#888]">
        <button aria-label="Minimize" className="flex w-[58px] justify-center"><span className="h-px w-3 bg-[#888]" /></button>
        <button aria-label="Restore" className="flex w-[58px] justify-center">
          <svg viewBox="0 0 12 12" className="size-3" fill="none" stroke="currentColor" aria-hidden="true"><rect x=".5" y="2.500" width="9" height="9" rx="1.500" /><path d="M3 .6h6q2.400 0 2.400 2.400v6" /></svg>
        </button>
        <button aria-label="Close" className="mr-[2px] flex w-[60px] justify-center"><CloseGlyph /></button>
      </div>
    </header>

    <nav className="flex h-[28px] items-center gap-[20px] border-b-2 border-[#c4c4c4] bg-white pt-[2px] pl-[13px]">
      <button>File</button>
      <button>Action</button>
      <button>View</button>
      <button>Help</button>
    </nav>
    <Toolbar />
    <div className="h-[8px] border-t border-[#dedede]" />

    <main className="mr-[2px] grow border-t-2 border-r border-l-2 border-t-[#707070] border-r-[#dedede] border-l-[#808080] bg-white pt-[2px]">
      <DeviceTree />
    </main>

    <div className="flex h-8 justify-end border-t border-[#dcdcdc] pt-[3px]">
      <div className="w-[167px] border-l border-[#d9d9d9]" />
      <div className="w-[107px] border-x border-[#d9d9d9]" />
      <div className="w-[2px]" />
    </div>
    <Taskbar />

    <PropertiesDialog />
    <UpdateDialog />
  </div>
);

export default App;
